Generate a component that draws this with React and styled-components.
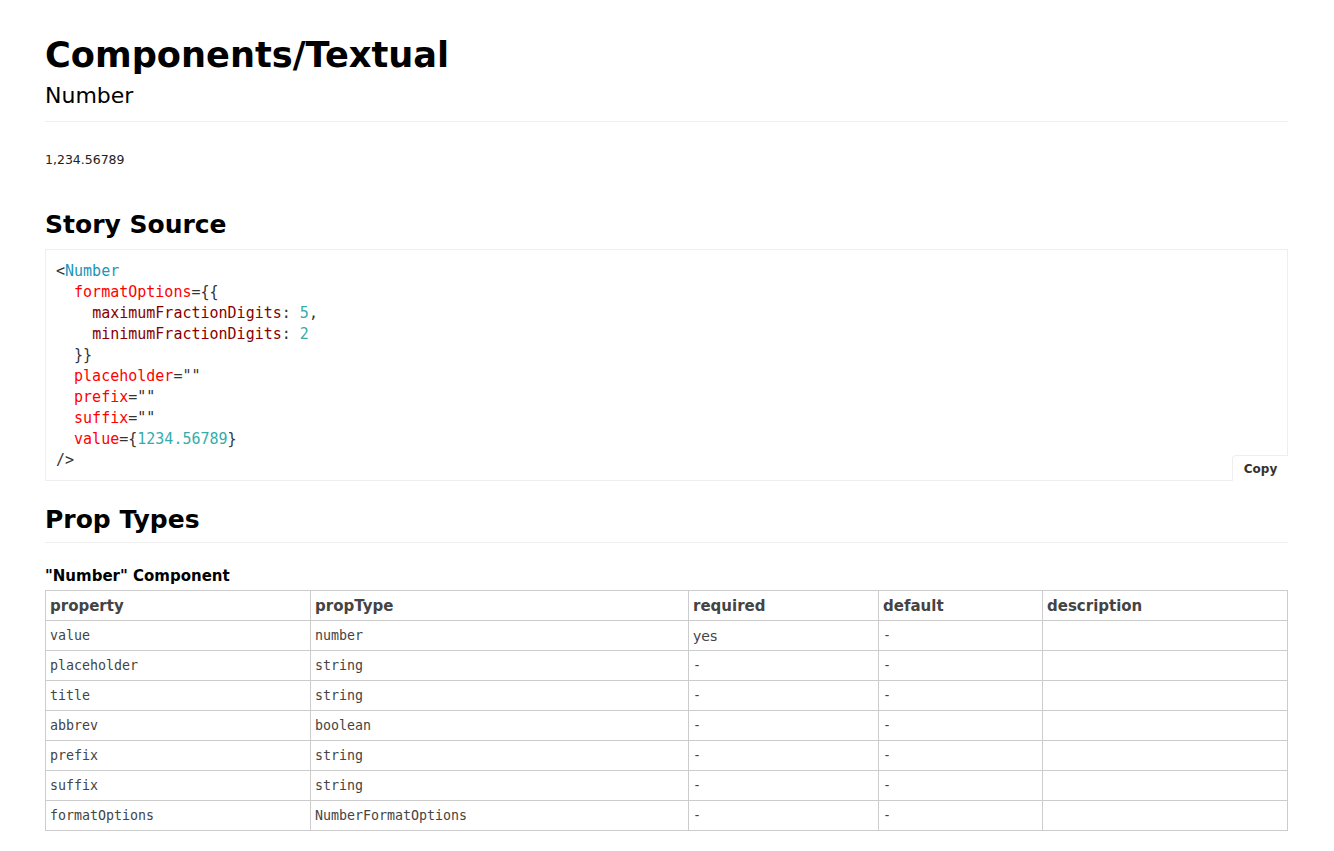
import React from "react";
import styled, { createGlobalStyle } from "styled-components";

const Global = createGlobalStyle`
  html, body { margin: 0; padding: 0; background: #fff; }
  body { font-family: "DejaVu Sans", sans-serif; color: #000; }
`;

const Page = styled.div`
  padding: 29px 46px 20px 45px;
`;

const Title = styled.h1`
  font-size: 35.2px;
  font-weight: bold;
  margin: 0;
  line-height: 51px;
`;

const Subtitle = styled.h2`
  font-size: 22px;
  font-weight: normal;
  margin: 0;
  line-height: 32px;
  padding-bottom: 9px;
  border-bottom: 1px solid #eee;
`;

const Preview = styled.div`
  font-size: 12.5px;
  color: #222;
  padding: 30px 0 41px;
  line-height: 16px;
`;

const SectionTitle = styled.h2`
  font-size: 25px;
  font-weight: bold;
  margin: 0;
  line-height: 32px;
  padding-bottom: ${(p) => (p.$rule ? "6px" : "8px")};
  border-bottom: ${(p) => (p.$rule ? "1px solid #eee" : "none")};
`;

const CodeBox = styled.div`
  position: relative;
  border: 1px solid #eee;
  padding: 11px 10px 9px;
  margin-bottom: 23px;
`;

const Code = styled.pre`
  margin: 0;
  font-family: "DejaVu Sans Mono", monospace;
  font-size: 15px;
  line-height: 21px;
  color: #333;
`;

const Tag = styled.span` color: #2196b9; `;
const Attr = styled.span` color: #f00; `;
const Key = styled.span` color: #800; `;
const Num = styled.span` color: #36acaa; `;

const CopyButton = styled.button`
  position: absolute;
  right: -1px;
  bottom: -1px;
  width: 56px;
  height: 26px;
  border: 1px solid #eee;
  border-right: none;
  border-bottom: none;
  border-radius: 4px 0 0 0;
  background: #fff;
  font-family: "DejaVu Sans", sans-serif;
  font-size: 12px;
  font-weight: bold;
  color: #333;
  padding: 0;
`;

const ComponentTitle = styled.h3`
  font-size: 15px;
  font-weight: bold;
  margin: 24px 0 5px;
  line-height: 18px;
`;

const Table = styled.table`
  width: 100%;
  border-collapse: collapse;
  table-layout: fixed;
`;

const Th = styled.th`
  text-align: left;
  border: 1px solid #ccc;
  padding: 0 4px;
  height: 29px;
  font-size: 15px;
  font-weight: bold;
  color: #444;
`;

const Td = styled.td`
  border: 1px solid #ccc;
  padding: 0 4px;
  height: 29px;
  font-family: ${(p) => (p.$sans ? '"DejaVu Sans", sans-serif' : '"DejaVu Sans Mono", monospace')};
  font-size: ${(p) => (p.$sans ? "14px" : "13.3px")};
  color: #444;
`;

const rows = [
  ["value", "number", "yes", "-"],
  ["placeholder", "string", "-", "-"],
  ["title", "string", "-", "-"],
  ["abbrev", "boolean", "-", "-"],
  ["prefix", "string", "-", "-"],
  ["suffix", "string", "-", "-"],
  ["formatOptions", "NumberFormatOptions", "-", "-"],
];

export default function App() {
  return (
    <>
      <Global />
      <Page>
        <Title>Components/Textual</Title>
        <Subtitle>Number</Subtitle>
        <Preview>1,234.56789</Preview>
        <SectionTitle>Story Source</SectionTitle>
        <CodeBox>
          <Code>
            {"<"}<Tag>Number</Tag>{"\n"}
            {"  "}<Attr>formatOptions</Attr>{"={{\n"}
            {"    "}<Key>maximumFractionDigits</Key>{": "}<Num>5</Num>{",\n"}
            {"    "}<Key>minimumFractionDigits</Key>{": "}<Num>2</Num>{"\n"}
            {"  }}\n"}
            {"  "}<Attr>placeholder</Attr>{'=""\n'}
            {"  "}<Attr>prefix</Attr>{'=""\n'}
            {"  "}<Attr>suffix</Attr>{'=""\n'}
            {"  "}<Attr>value</Attr>{"={"}<Num>1234.56789</Num>{"}\n"}
            {"/>"}
          </Code>
          <CopyButton>Copy</CopyButton>
        </CodeBox>
        <SectionTitle $rule>Prop Types</SectionTitle>
        <ComponentTitle>"Number" Component</ComponentTitle>
        <Table>
          <colgroup>
            <col style={{ width: 265 }} />
            <col style={{ width: 378 }} />
            <col style={{ width: 190 }} />
            <col style={{ width: 164 }} />
            <col />
          </colgroup>
          <thead>
            <tr>
              <Th>property</Th>
              <Th>propType</Th>
              <Th>required</Th>
              <Th>default</Th>
              <Th>description</Th>
            </tr>
          </thead>
          <tbody>
            {rows.map((r) => (
              <tr key={r[0]}>
                <Td>{r[0]}</Td>
                <Td>{r[1]}</Td>
                <Td $sans={r[2] === "yes"}>{r[2]}</Td>
                <Td>{r[3]}</Td>
                <Td />
              </tr>
            ))}
          </tbody>
        </Table>
      </Page>
    </>
  );
}
